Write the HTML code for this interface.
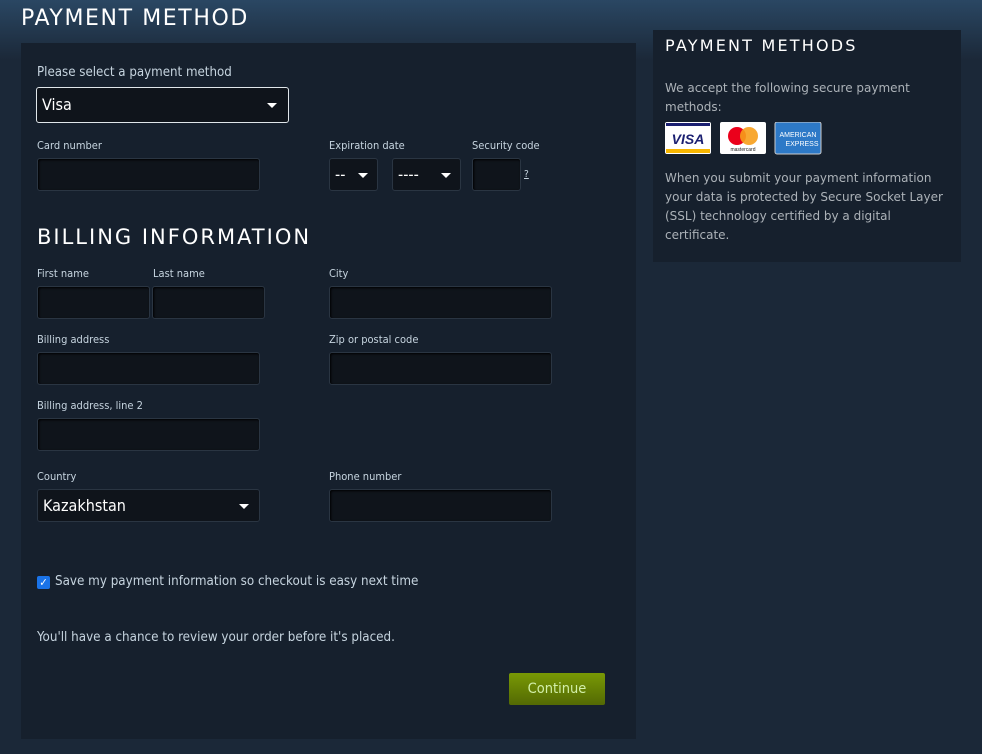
<!DOCTYPE html>
<html><head><meta charset="utf-8"><style>
*{box-sizing:border-box;margin:0;padding:0}
body{width:982px;height:754px;overflow:hidden;background:#1b2838;font-family:"DejaVu Sans Condensed","DejaVu Sans","Liberation Sans",sans-serif;color:#c6d4df;position:relative}
.top{position:absolute;left:0;top:0;width:982px;height:60px;background:linear-gradient(#2a4763 0,#1b2838 60px)}
.a{position:absolute}
h1{position:absolute;left:21px;top:6px;font-weight:normal;font-size:22px;letter-spacing:1.6px;color:#fff;font-family:"DejaVu Sans","Liberation Sans",sans-serif}
.panel{position:absolute;left:21px;top:43px;width:615px;height:696px;background:#16202d}
.rp{position:absolute;left:653px;top:30px;width:308px;height:232px;background:#16202d}
.lab{position:absolute;font-size:11px;color:#c6d4df}
.in{position:absolute;height:33px;background:#0f141b;border:1px solid #2a3542;border-radius:3px;box-shadow:inset 1px 1px 2px #000}
.sel{position:absolute;background:#0f141b;border:1px solid #2a3542;border-radius:3px;color:#fff;font-size:16px;padding-left:5px;line-height:31px}
.arr{position:absolute;width:0;height:0;border-left:5px solid transparent;border-right:5px solid transparent;border-top:5px solid #fff}
h2{position:absolute;left:37px;top:225px;font-weight:normal;font-size:21px;letter-spacing:2px;color:#fff;font-family:"DejaVu Sans","Liberation Sans",sans-serif}
.rt{position:absolute;left:665px;font-family:"DejaVu Sans","Liberation Sans",sans-serif;font-size:12px;line-height:19px;color:#acb2b8;width:285px}
</style></head><body>
<div class="top"></div>
<h1>PAYMENT METHOD</h1>
<div class="panel"></div>
<div class="lab" style="left:37px;top:65px;font-size:13.2px">Please select a payment method</div>
<div class="sel" style="left:36px;top:87px;width:253px;height:36px;border:1px solid #e0e6ea;line-height:34px">Visa</div>
<div class="arr" style="left:267px;top:103px"></div>
<div class="lab" style="left:37px;top:139px">Card number</div>
<div class="in" style="left:37px;top:158px;width:223px"></div>
<div class="lab" style="left:329px;top:139px">Expiration date</div>
<div class="lab" style="left:472px;top:139px">Security code</div>
<div class="sel" style="left:329px;top:158px;width:49px;height:33px">--</div>
<div class="arr" style="left:358px;top:173px"></div>
<div class="sel" style="left:392px;top:158px;width:69px;height:33px">----</div>
<div class="arr" style="left:441px;top:173px"></div>
<div class="in" style="left:472px;top:158px;width:49px"></div>
<div class="lab" style="left:524px;top:169px;text-decoration:underline;font-size:10px">?</div>
<h2>BILLING INFORMATION</h2>
<div class="lab" style="left:37px;top:267px">First name</div>
<div class="lab" style="left:153px;top:267px">Last name</div>
<div class="lab" style="left:329px;top:267px">City</div>
<div class="in" style="left:37px;top:286px;width:113px"></div>
<div class="in" style="left:152px;top:286px;width:113px"></div>
<div class="in" style="left:329px;top:286px;width:223px"></div>
<div class="lab" style="left:37px;top:333px">Billing address</div>
<div class="lab" style="left:329px;top:333px">Zip or postal code</div>
<div class="in" style="left:37px;top:352px;width:223px"></div>
<div class="in" style="left:329px;top:352px;width:223px"></div>
<div class="lab" style="left:37px;top:399px">Billing address, line 2</div>
<div class="in" style="left:37px;top:418px;width:223px"></div>
<div class="lab" style="left:37px;top:470px">Country</div>
<div class="lab" style="left:329px;top:470px">Phone number</div>
<div class="sel" style="left:37px;top:489px;width:223px;height:33px">Kazakhstan</div>
<div class="arr" style="left:239px;top:504px"></div>
<div class="in" style="left:329px;top:489px;width:223px"></div>
<div class="a" style="left:37px;top:576px;width:13px;height:13px;background:#1a73e8;border-radius:2px;color:#fff;font-size:11px;line-height:13px;text-align:center">✓</div>
<div class="lab" style="left:55px;top:574px;font-size:13.3px">Save my payment information so checkout is easy next time</div>
<div class="lab" style="left:37px;top:630px;font-size:13.3px">You'll have a chance to review your order before it's placed.</div>
<div class="a" style="left:509px;top:673px;width:96px;height:32px;background:linear-gradient(#799905,#536904);border-radius:2px;color:#d2efa9;font-size:14.5px;line-height:32px;text-align:center">Continue</div>

<div class="rp"></div>
<div class="a" style="left:665px;top:36px;font-family:'DejaVu Sans','Liberation Sans',sans-serif;font-size:16px;letter-spacing:2.2px;color:#fff">PAYMENT METHODS</div>
<div class="rt" style="top:79px">We accept the following secure payment methods:</div>
<svg class="a" style="left:665px;top:122px" width="160" height="33">
<rect x="0" y="0" width="46" height="32" rx="2" fill="#fff"/><rect x="1" y="1" width="44" height="3" fill="#1a1f71"/><rect x="1" y="27" width="44" height="4" fill="#f7b600"/>
<text x="23" y="22" text-anchor="middle" font-family="Liberation Sans" font-weight="bold" font-style="italic" font-size="14" fill="#1a1f71">VISA</text>
<rect x="55" y="0" width="46" height="32" rx="2" fill="#fff"/><circle cx="72" cy="14" r="9" fill="#eb001b"/><circle cx="84" cy="14" r="9" fill="#f79e1b" opacity=".9"/>
<text x="78" y="29" text-anchor="middle" font-family="Liberation Sans" font-size="5" fill="#222">mastercard</text>
<rect x="110" y="0" width="46" height="32" rx="2" fill="#2d79c7" stroke="#ccc"/>
<text x="133" y="15" text-anchor="middle" font-family="Liberation Sans" font-size="7" fill="#fff">AMERICAN</text>
<text x="137" y="24" text-anchor="middle" font-family="Liberation Sans" font-size="7" fill="#fff">EXPRESS</text>
</svg>
<div class="rt" style="top:169px">When you submit your payment information your data is protected by Secure Socket Layer (SSL) technology certified by a digital certificate.</div>
</body></html>
